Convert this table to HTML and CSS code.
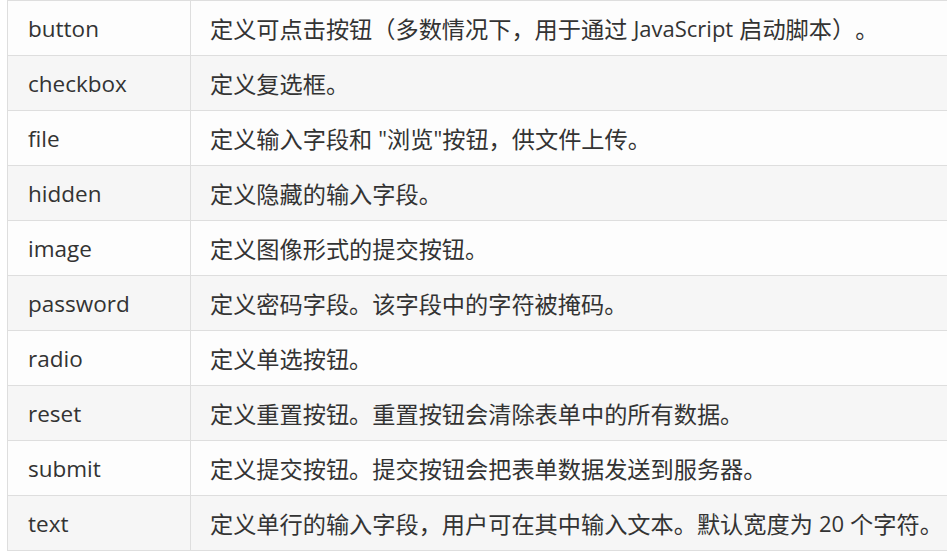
FILE: index.html
```html
<!DOCTYPE html>
<html lang="zh-CN">
<head>
<meta charset="utf-8">
<title>input type</title>
<link rel="stylesheet" href="styles.css">
</head>
<body>
<div class="table">
  <div class="row"><div class="cell name">button</div><div class="cell desc">定义可点击按钮（多数情况下，用于通过 <span class="lat">JavaScript</span> 启动脚本）。</div></div>
  <div class="row alt"><div class="cell name">checkbox</div><div class="cell desc">定义复选框。</div></div>
  <div class="row"><div class="cell name">file</div><div class="cell desc">定义输入字段和 <span class="lat">"</span>浏览<span class="lat">"</span>按钮，供文件上传。</div></div>
  <div class="row alt"><div class="cell name">hidden</div><div class="cell desc">定义隐藏的输入字段。</div></div>
  <div class="row"><div class="cell name">image</div><div class="cell desc">定义图像形式的提交按钮。</div></div>
  <div class="row alt"><div class="cell name">password</div><div class="cell desc">定义密码字段。该字段中的字符被掩码。</div></div>
  <div class="row"><div class="cell name">radio</div><div class="cell desc">定义单选按钮。</div></div>
  <div class="row alt"><div class="cell name">reset</div><div class="cell desc">定义重置按钮。重置按钮会清除表单中的所有数据。</div></div>
  <div class="row"><div class="cell name">submit</div><div class="cell desc">定义提交按钮。提交按钮会把表单数据发送到服务器。</div></div>
  <div class="row alt"><div class="cell name">text</div><div class="cell desc">定义单行的输入字段，用户可在其中输入文本。默认宽度为 <span class="lat">20</span> 个字符。</div></div>
</div>
</body>
</html>
```

FILE: styles.css
```css
html, body {
  margin: 0;
  padding: 0;
  background: #ffffff;
}
body {
  font-family: "Open Sans", "Noto Sans CJK SC", sans-serif;
  font-size: 22px;
  color: #333333;
  overflow: hidden;
}
.table {
  margin-left: 7px;
  width: 1000px;
  border-top: 1px solid #dedede;
  border-left: 1px solid #dedede;
}
.row {
  display: grid;
  grid-template-columns: 183px 1fr;
  background: #fdfdfd;
}
.row.alt {
  background: #f6f6f6;
}
.cell {
  box-sizing: border-box;
  height: 55px;
  display: flex;
  align-items: center;
  border-right: 1px solid #dedede;
  border-bottom: 1px solid #dedede;
  white-space: pre;
}
.name {
  padding-left: 20px;
  font-size: 22.5px;
}
.desc {
  padding-left: 19px;
  font-size: 23.2px;
  text-spacing-trim: space-all;
}
.lat {
  font-size: 22px;
}
```
